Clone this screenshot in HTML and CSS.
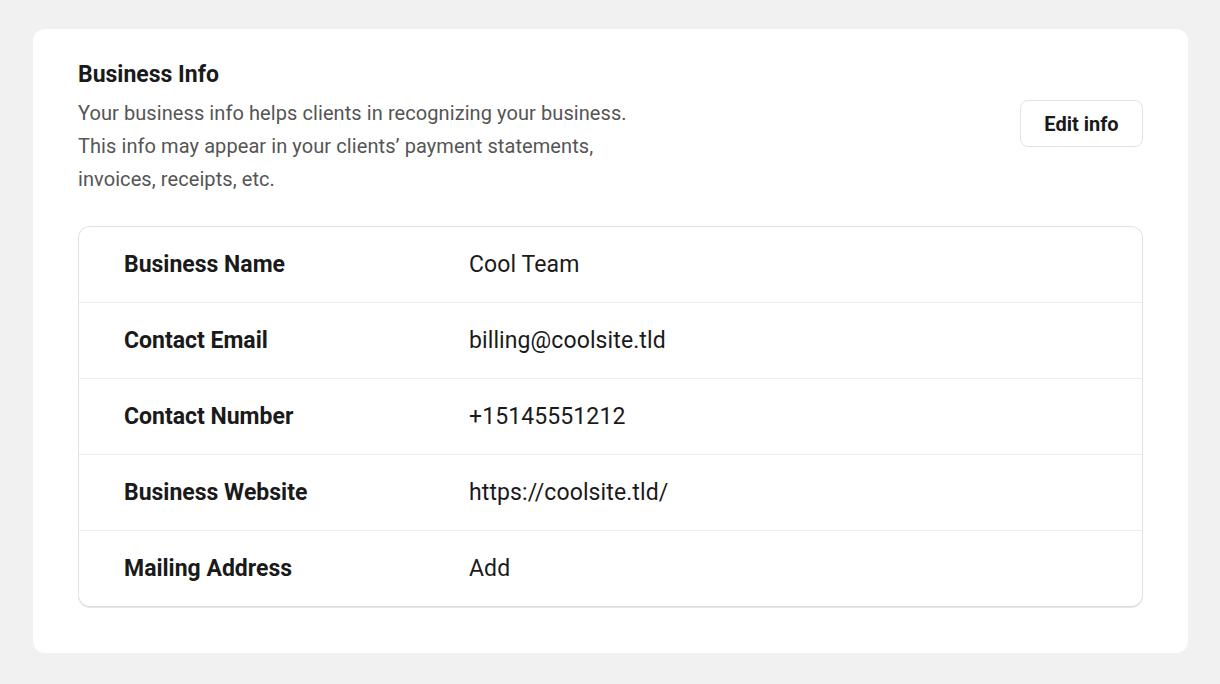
FILE: index.html
```html
<!DOCTYPE html>
<html>
<head>
<meta charset="utf-8">
<link rel="stylesheet" href="styles.css">
</head>
<body>
<div class="page">
  <section class="card">
    <div class="header">
      <div class="intro">
        <h2 class="title">Business Info</h2>
        <p class="desc">Your business info helps clients in recognizing your business. This info may appear in your clients’ payment statements, invoices, receipts, etc.</p>
      </div>
      <button class="btn">Edit info</button>
    </div>
    <div class="table">
      <div class="row"><div class="label">Business Name</div><div class="value">Cool Team</div></div>
      <div class="row"><div class="label">Contact Email</div><div class="value">billing@coolsite.tld</div></div>
      <div class="row"><div class="label">Contact Number</div><div class="value">+15145551212</div></div>
      <div class="row"><div class="label">Business Website</div><div class="value">https://coolsite.tld/</div></div>
      <div class="row"><div class="label">Mailing Address</div><div class="value">Add</div></div>
    </div>
  </section>
</div>
</body>
</html>
```
FILE: styles.css
```css
* { box-sizing: border-box; }
html, body { margin: 0; padding: 0; }
body {
  background: #f1f1f1;
  font-family: Roboto, "Liberation Sans", sans-serif;
  color: #1a1a1a;
}
.page { padding: 29px 32px 31px 33px; }
.card {
  background: #fff;
  border-radius: 12px;
  padding: 34px 45px 46px 45px;
}
.header {
  display: flex;
  align-items: center;
  justify-content: space-between;
}
.title {
  margin: 0;
  font-size: 23px;
  line-height: 24px;
  font-weight: 700;
  color: #1a1a1a;
}
.desc {
  margin: 10px 0 0 0;
  width: 570px;
  font-size: 20px;
  letter-spacing: 0.08px;
  line-height: 33px;
  color: #555;
}
.btn {
  font-family: inherit;
  font-size: 20px;
  font-weight: 700;
  color: #1a1a1a;
  background: #fff;
  border: 1px solid #e3e3e3;
  border-radius: 8px;
  width: 123px;
  height: 47px;
  padding: 0;
  margin-top: -12px;
}
.table {
  margin-top: 30px;
  border: 1px solid #e2e2e2;
  border-bottom-color: #dcdcdc;
  box-shadow: 0 1px 0 #e6e6e6;
  border-radius: 12px;
  overflow: hidden;
}
.row {
  display: grid;
  grid-template-columns: 345px 1fr;
  align-items: center;
  height: 76px;
  padding-left: 45px;
  border-top: 1px solid #ededed;
  font-size: 23px;
}
.row:first-child { border-top: none; height: 75px; }
.label { font-weight: 700; color: #1a1a1a; }
.value { color: #1a1a1a; letter-spacing: 0.1px; }
```
